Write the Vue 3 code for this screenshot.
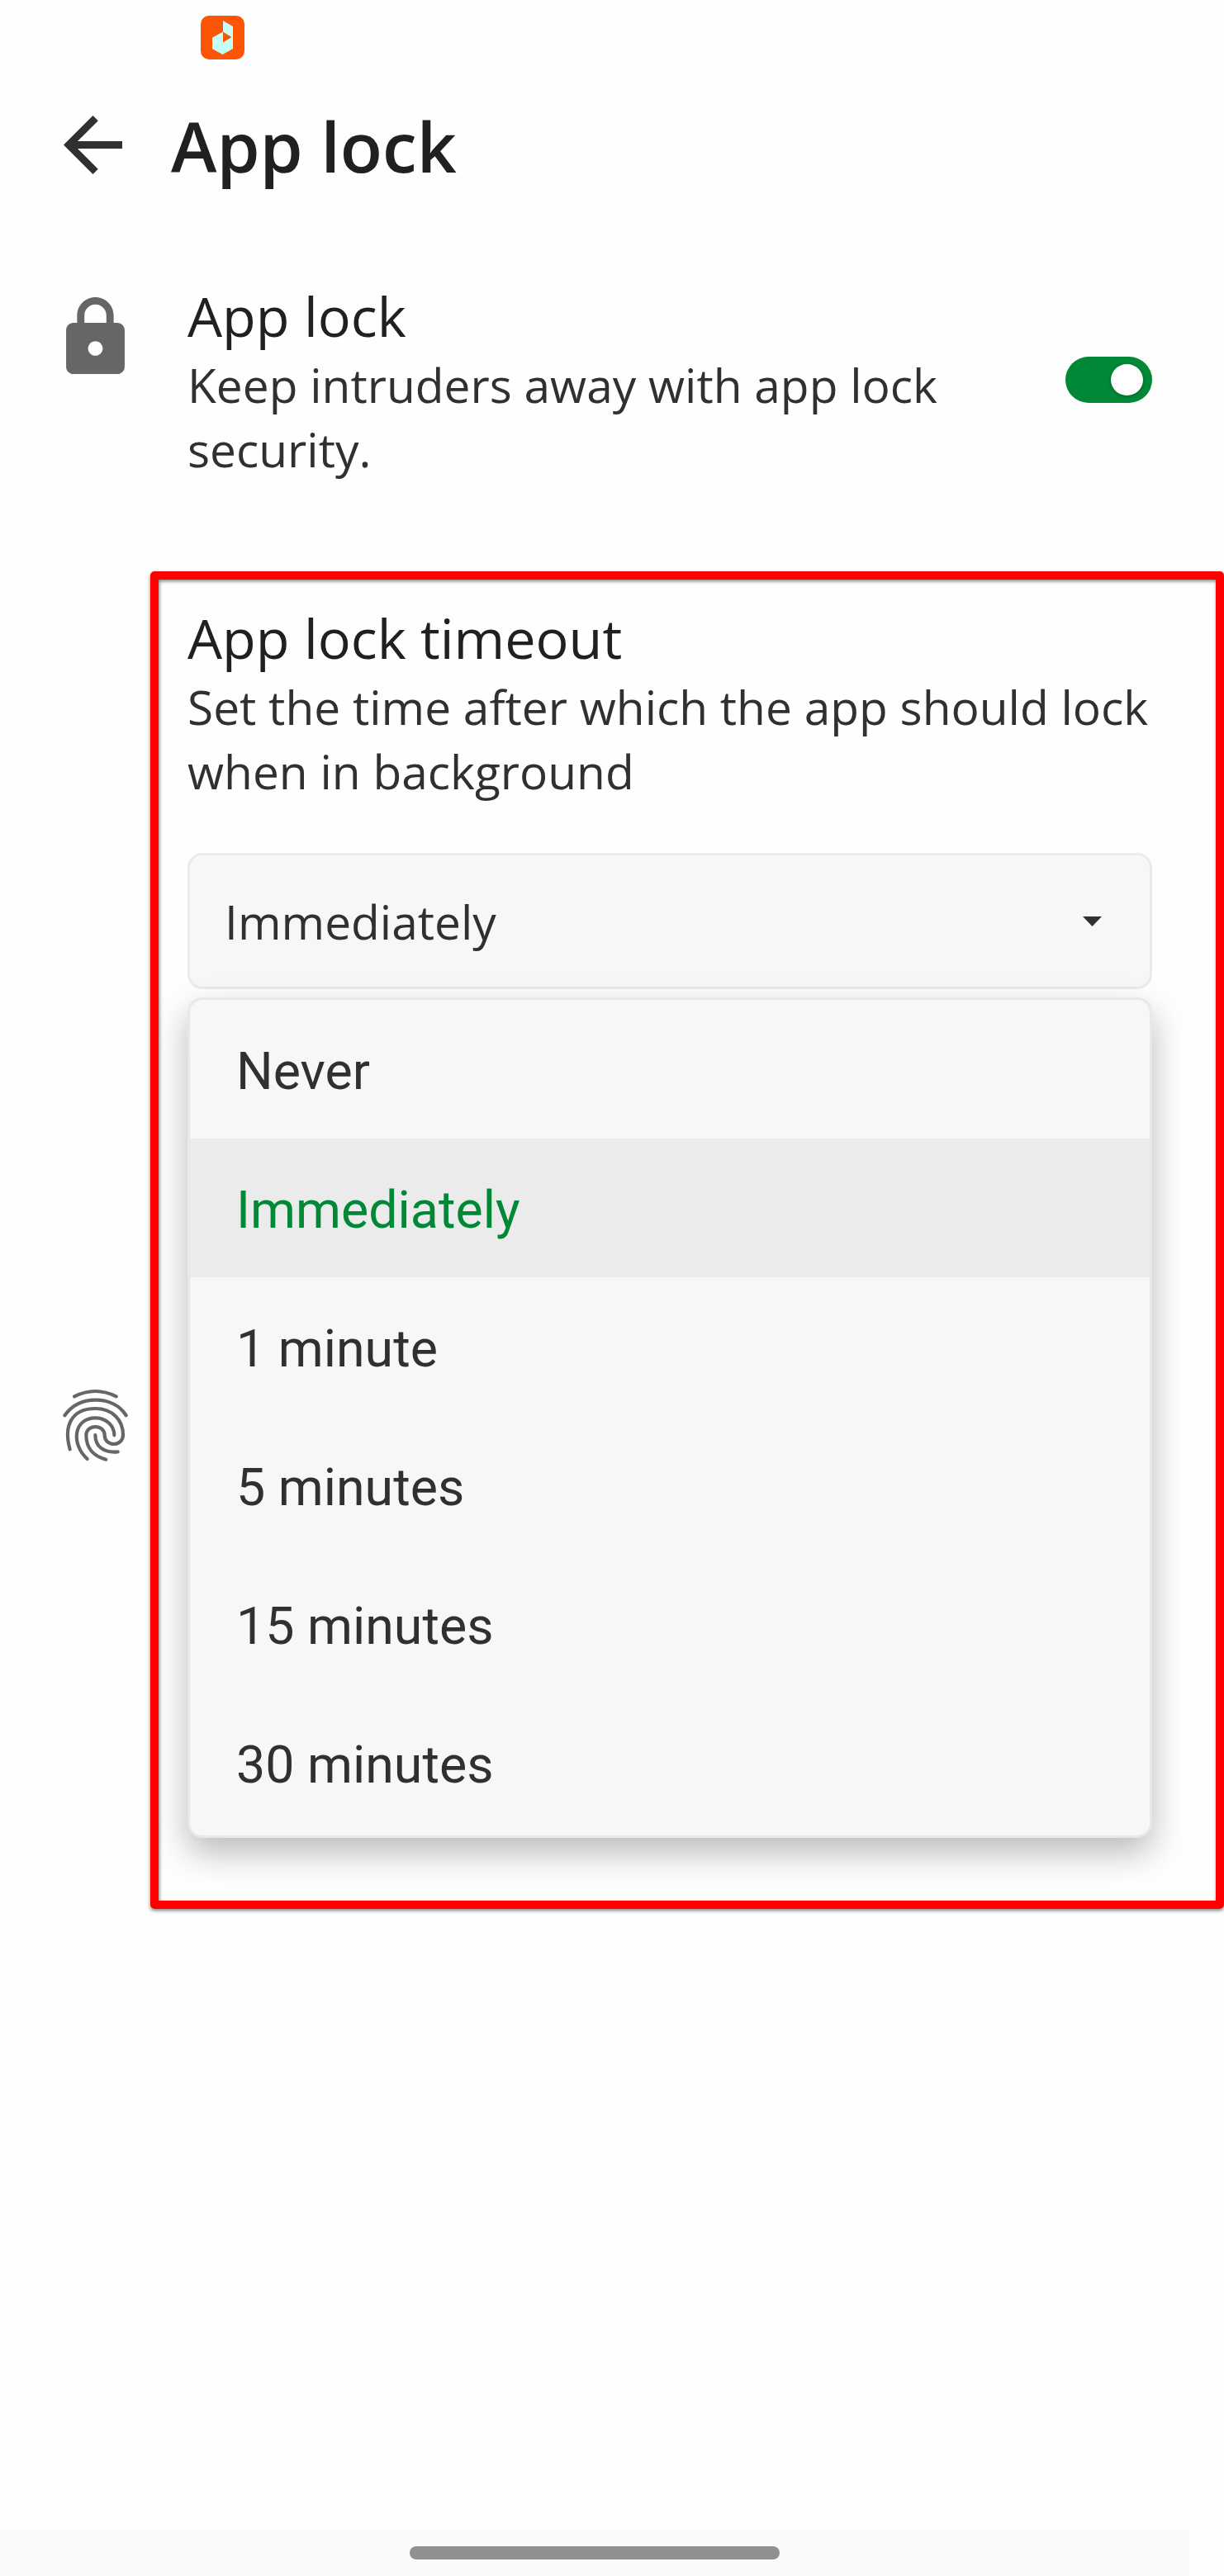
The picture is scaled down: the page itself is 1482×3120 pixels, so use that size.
<script setup>
const options = ['Never', 'Immediately', '1 minute', '5 minutes', '15 minutes', '30 minutes']
const selected = 'Immediately'
</script>

<template>
  <div class="screen">
    <div class="status">
      <svg class="logo" viewBox="0 0 53 53">
        <rect width="53" height="53" rx="10" fill="#fb5607" />
        <path d="M27 6L39 13V40L26.500 47L14 40V26.500L27 19.500Z" fill="#c4fffa" />
        <path d="M27 19.500L37.500 26L27 32.500Z" fill="#fb5607" />
      </svg>
    </div>
    <header class="bar">
      <svg class="back" viewBox="4 4 16 16"><path d="M20 11H7.830l5.590-5.590L12 4l-8 8 8 8 1.410-1.410L7.830 13H20z" fill="#303030" /></svg>
      <h1>App lock</h1>
    </header>
    <section class="row lock-row">
      <svg class="lock" viewBox="4 1 16 21"><path fill="#666" fill-rule="evenodd" d="M18 8h-1V6c0-2.760-2.240-5-5-5S7 3.240 7 6v2H6c-1.100 0-2 .9-2 2v10c0 1.100.9 2 2 2h12c1.100 0 2-.9 2-2V10c0-1.100-.9-2-2-2zm-6 9c-1.100 0-2-.9-2-2s.9-2 2-2 2 .9 2 2-.9 2-2 2zm3-9H9V6c0-1.660 1.340-3 3-3s3 1.340 3 3v2z" /></svg>
      <div class="copy">
        <h2>App lock</h2>
        <p>Keep intruders away with app lock<br />security.</p>
      </div>
      <div class="toggle"><span class="thumb"></span></div>
    </section>
    <section class="row timeout-row">
      <svg class="finger" viewBox="45 60 246 276" fill="none" stroke="#666" stroke-width="12.500" stroke-linecap="round">
        <path d="M90 94Q167 56 242 94" />
        <path d="M55 163C80 128 118 107 167 107S256 128 278 163" />
        <path d="M74 286C50 200 80 138 167 138C228 138 267 180 267 233C267 278 200 278 200 235C200 194 133 194 133 235C133 282 160 312 205 323" />
        <path d="M137 321C76 265 88 172 167 172C206 172 235 200 235 235" />
        <path d="M166 234C166 275 195 300 248 295" />
      </svg>
      <div class="panel">
        <h2>App lock timeout</h2>
        <p>Set the time after which the app should lock<br />when in background</p>
        <div class="select">
          <span>{{ selected }}</span>
          <svg class="caret" viewBox="0 0 23 12"><path d="M0 0H23L11.500 12Z" fill="#303030" /></svg>
        </div>
        <ul class="menu">
          <li v-for="o in options" :key="o" :class="{ active: o === selected }">{{ o }}</li>
        </ul>
      </div>
      <div class="highlight"></div>
    </section>
    <footer class="nav"><span class="pill"></span></footer>
  </div>
</template>

<style>
body { margin: 0; background: #fefefe; }
</style>

<style scoped>
.screen { width: 1482px; height: 3120px; display: flex; flex-direction: column; background: #fefefe; color: #303030; font-family: "Open Sans", sans-serif; overflow: hidden; }
h1, h2, p, ul { margin: 0; padding: 0; }
svg { display: block; flex: none; }
.status { height: 100px; flex: none; padding: 19px 0 0 243px; box-sizing: border-box; }
.logo { width: 53px; height: 53px; }
.bar { height: 150px; flex: none; display: flex; align-items: center; padding-left: 77px; gap: 59px; }
.back { width: 71px; height: 71px; }
h1 { font-size: 83.800px; font-weight: 600; line-height: 114px; color: #202020; white-space: nowrap; padding-top: 3px; }
.row { display: flex; flex: none; position: relative; }
.lock-row { height: 390px; padding: 89px 87px 0 80px; box-sizing: border-box; align-items: flex-start; }
.lock { width: 71px; height: 93px; margin-top: 21px; }
.copy { flex: 1; margin-left: 76px; }
h2 { font-size: 66.600px; line-height: 88px; font-weight: 400; color: #202020; white-space: nowrap; }
p { font-size: 56.850px; line-height: 78.300px; white-space: nowrap; }
.toggle { width: 105px; height: 56px; border-radius: 28px; background: #008837; margin-top: 93px; display: flex; align-items: center; justify-content: flex-end; padding-right: 11px; box-sizing: border-box; }
.thumb { width: 39px; height: 38px; border-radius: 50%; background: #fff; box-shadow: 0 1px 4px rgba(0, 0, 0, .3); }
.timeout-row { height: 1760px; padding: 89px 87px 0 75px; box-sizing: border-box; align-items: flex-start; }
.finger { width: 82px; height: 92px; margin-top: 951px; }
.panel { margin-left: 70px; width: 1168px; }
.select { height: 165px; margin-top: 59.400px; box-sizing: border-box; border: 3px solid #ebebeb; border-radius: 18px; background: #f7f7f7; display: flex; align-items: center; justify-content: space-between; padding: 2px 58px 0 42px; font-size: 56.850px; }
.caret { width: 23px; height: 12px; }
.menu { list-style: none; margin-top: 10px; height: 1018px; box-sizing: border-box; border: 3px solid #e8e8e8; border-radius: 18px; background: #f7f7f7; box-shadow: 0 18px 42px rgba(0, 0, 0, .27); position: relative; }
.menu li { height: 168px; padding-left: 56px; font: 62.700px/173px Roboto, sans-serif; }
.menu li.active { background: #ebebeb; color: #008837; }
.highlight { position: absolute; left: 181.500px; top: 51.500px; width: 1300.500px; height: 1620.500px; box-sizing: border-box; border: 10px solid #f00; border-radius: 5px; box-shadow: 0 2px 4px rgba(0, 0, 0, .5), inset 1px 2px 4px rgba(0, 0, 0, .5); }
.nav { margin-top: auto; width: 1440px; height: 56px; flex: none; background: #fafafa; display: flex; justify-content: center; padding-top: 20px; box-sizing: border-box; }
.pill { width: 448px; height: 16px; border-radius: 8px; background: #909090; }
</style>
